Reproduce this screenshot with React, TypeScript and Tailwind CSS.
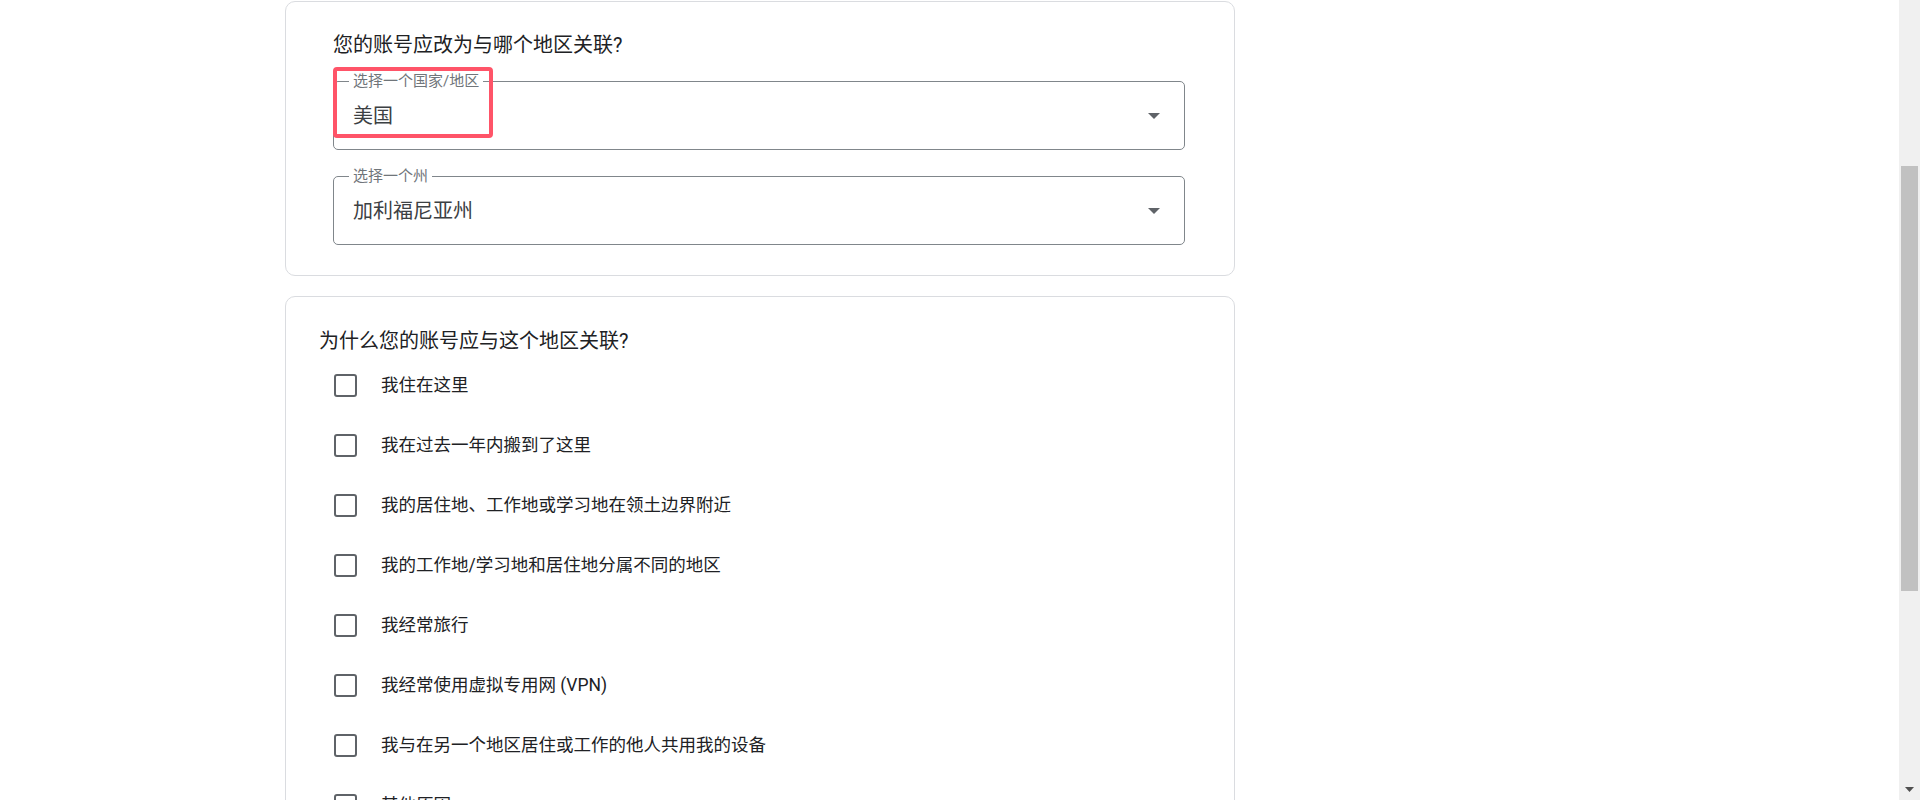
import React from 'react';

const reasons = [
  '我住在这里',
  '我在过去一年内搬到了这里',
  '我的居住地、工作地或学习地在领土边界附近',
  '我的工作地/学习地和居住地分属不同的地区',
  '我经常旅行',
  '我经常使用虚拟专用网 (VPN)',
  '我与在另一个地区居住或工作的他人共用我的设备',
  '其他原因',
];

function CaretDown() {
  return (
    <svg width="12" height="6" viewBox="0 0 12 6" className="shrink-0">
      <path d="M0 0h12L6 6z" fill="#5f6368" />
    </svg>
  );
}

function OutlinedSelect({
  label,
  value,
  highlight,
}: {
  label: string;
  value: string;
  highlight?: boolean;
}) {
  return (
    <div className="relative h-[69px] w-full rounded-[5px] border border-[#80868b] flex items-center pl-[19px] pr-[24px]">
      {/* 浮动标签 */}
      <span className="absolute left-[15px] -top-[10px] bg-white px-[4px] text-[15px] leading-[18px] text-[#70757a]">
        {label}
      </span>
      <span className="flex-1 text-[20px] leading-[28px] text-[#3c4043]">{value}</span>
      <CaretDown />
      {highlight && (
        <div className="absolute -left-px -top-[15px] w-[160px] h-[71px] rounded-[4px] border-4 border-[#ff5468] pointer-events-none" />
      )}
    </div>
  );
}

function Checkbox({ label }: { label: string }) {
  return (
    <label className="flex items-center h-[60px] cursor-pointer">
      <span className="w-[23px] h-[23px] rounded-[3px] border-[2.5px] border-[#5f6368] bg-white shrink-0" />
      <span className="ml-[24px] text-[17.5px] leading-[24px] text-[#202124]">{label}</span>
    </label>
  );
}

export default function App() {
  return (
    <div
      className="flex h-[800px] w-[1920px] overflow-hidden bg-white"
      style={{ fontFamily: 'Roboto, "Noto Sans CJK SC", sans-serif' }}
    >
      <main className="flex-1 pl-[285px]">
        {/* 地区选择 */}
        <section className="mt-px w-[950px] rounded-[10px] border border-[#dadce0] pl-[47px] pr-[49px] pt-[29px] pb-[30px]">
          <h2 className="text-[20px] leading-[28px] text-[#202124]">您的账号应改为与哪个地区关联?</h2>
          <div className="mt-[22px]">
            <OutlinedSelect label="选择一个国家/地区" value="美国" highlight />
          </div>
          <div className="mt-[26px]">
            <OutlinedSelect label="选择一个州" value="加利福尼亚州" />
          </div>
        </section>

        {/* 原因 */}
        <section className="mt-[20px] w-[950px] rounded-[10px] border border-[#dadce0] pl-[33px] pr-[49px] pt-[30px] pb-[20px]">
          <h2 className="text-[20px] leading-[28px] text-[#202124]">为什么您的账号应与这个地区关联?</h2>
          <div className="ml-[15px] flex flex-col">
            {reasons.map((r) => (
              <Checkbox key={r} label={r} />
            ))}
          </div>
        </section>
      </main>

      {/* 滚动条 */}
      <div className="w-[21px] h-full bg-[#f0f0f0] flex flex-col items-center">
        <div className="h-[166px]" />
        <div className="w-[17px] h-[425px] bg-[#c1c1c1]" />
        <div className="flex-1" />
        <svg width="9" height="5" viewBox="0 0 9 5" className="mb-[8px]">
          <path d="M0 0h9L4.5 5z" fill="#505050" />
        </svg>
      </div>
    </div>
  );
}
